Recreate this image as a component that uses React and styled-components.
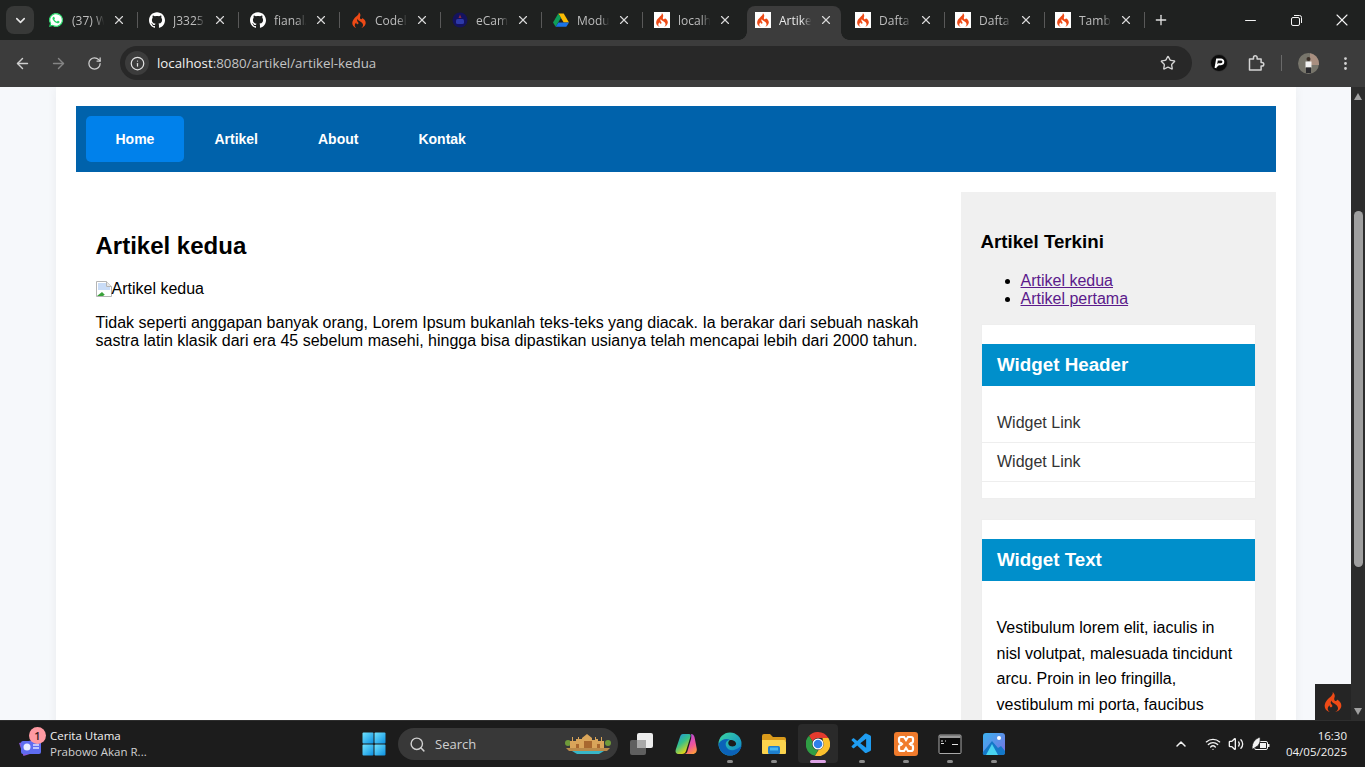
import React from "react";
import styled, { createGlobalStyle } from "styled-components";
import { ArrowLeft, ArrowRight, RotateCw, Info, Star, EllipsisVertical, ChevronDown, ChevronUp, X, Plus, Minus, Search, Wifi, Volume2 } from "lucide-react";
import { SiCodeigniter, SiGithub } from "react-icons/si";
import { IoLogoWhatsapp } from "react-icons/io5";
import { VscVscode } from "react-icons/vsc";

const GlobalStyle = createGlobalStyle`
  html, body {
    margin: 0;
    padding: 0;
    overflow: hidden;
  }
  * {
    box-sizing: border-box;
  }
`;

const Screen = styled.div`
  width: 1365px;
  height: 767px;
  display: flex;
  flex-direction: column;
  overflow: hidden;
  position: relative;
  font-family: "Liberation Sans", Arial, sans-serif;
  background: #f6f8fb;
`;

/* ---------- browser tabs ---------- */

const TabStrip = styled.div`
  height: 40px;
  flex-shrink: 0;
  display: flex;
  background: #1f2120;
  padding-left: 6px;
`;

const TabSearch = styled.div`
  width: 28px;
  height: 28px;
  margin-top: 6px;
  margin-right: 6px;
  border-radius: 8px;
  background: #383938;
  color: #e6e6e6;
  display: flex;
  align-items: center;
  justify-content: center;
`;

const Tab = styled.div`
  width: 94px;
  height: 34px;
  margin-top: 6px;
  padding: 0 8px 6px 8px;
  flex-shrink: 0;
  position: relative;
  display: flex;
  align-items: center;
  gap: 8px;
  border-radius: 8px 8px 0 0;
  background: ${({ $active }) => ($active ? "#3c3c3c" : "transparent")};
  color: ${({ $active }) => ($active ? "#e8e8e8" : "#bdbdbd")};
  ${({ $active }) =>
    $active &&
    `
    &::before, &::after {
      content: "";
      position: absolute;
      bottom: 0;
      width: 8px;
      height: 8px;
    }
    &::before {
      left: -8px;
      background: radial-gradient(circle at 0 0, transparent 7.5px, #3c3c3c 8px);
    }
    &::after {
      right: -8px;
      background: radial-gradient(circle at 100% 0, transparent 7.5px, #3c3c3c 8px);
    }
  `}
`;

const TabFavicon = styled.span`
  width: 16px;
  height: 16px;
  flex-shrink: 0;
  display: flex;
  align-items: center;
  justify-content: center;
  background: ${({ $white }) => ($white ? "#fff" : "transparent")};
  color: #ee4a16;
`;

const WhatsappMark = styled.span`
  display: flex;
  color: #25d366;
  border-radius: 50%;
  background: radial-gradient(circle, #fff 58%, transparent 60%);
`;

const GithubMark = styled.span`
  display: flex;
  color: #fff;
`;

const TabTitle = styled.span`
  width: 38px;
  margin-right: -6px;
  flex-shrink: 0;
  overflow: hidden;
  white-space: nowrap;
  font-family: "Open Sans", sans-serif;
  font-size: 12px;
  -webkit-mask-image: linear-gradient(to right, #000 60%, transparent 85%);
  mask-image: linear-gradient(to right, #000 60%, transparent 85%);
`;

const TabClose = styled.span`
  display: flex;
  margin-left: auto;
  color: #d8d8d8;
`;

const TabGap = styled.div`
  width: ${({ $w }) => $w}px;
  flex-shrink: 0;
  display: flex;
  justify-content: center;
  padding-top: 12px;
  &::before {
    content: "";
    width: 1px;
    height: 16px;
    background: ${({ $hidden }) => ($hidden ? "transparent" : "#595959")};
  }
`;

const NewTab = styled.div`
  margin-left: 6px;
  margin-top: 12px;
  height: 16px;
  color: #e0e0e0;
`;

const WindowButtons = styled.div`
  margin-left: auto;
  display: flex;
  color: #f5f5f5;
`;

const WindowButton = styled.div`
  width: 46px;
  height: 40px;
  display: flex;
  align-items: center;
  justify-content: center;
`;

/* ---------- toolbar ---------- */

const Toolbar = styled.div`
  height: 47px;
  flex-shrink: 0;
  display: flex;
  align-items: center;
  background: #3c3c3c;
  padding: 0 0 1px 4px;
`;

const NavButton = styled.div`
  width: 36px;
  height: 34px;
  flex-shrink: 0;
  display: flex;
  align-items: center;
  justify-content: center;
  color: ${({ $dim }) => ($dim ? "#858585" : "#cfcfcf")};
`;

const AddressBar = styled.div`
  width: 1072px;
  height: 34px;
  flex-shrink: 0;
  margin-left: 8px;
  margin-right: 8px;
  border-radius: 17px;
  background: #282828;
  display: flex;
  align-items: center;
  padding: 0 16px 0 5px;
`;

const SiteInfo = styled.div`
  width: 24px;
  height: 24px;
  border-radius: 50%;
  background: #3c3c3c;
  color: #e0e0e0;
  display: flex;
  align-items: center;
  justify-content: center;
`;

const Url = styled.div`
  margin-left: 8px;
  font-family: "Open Sans", sans-serif;
  font-size: 13.3px;
  color: #c4c4c4;
  span {
    color: #f0f0f0;
  }
`;

const StarWrap = styled.div`
  margin-left: auto;
  display: flex;
  color: #d4d4d4;
`;

const ToolbarRight = styled.div`
  flex: 1;
  display: flex;
  align-items: center;
  color: #d4d4d4;
`;

const ExtSlot = styled.div`
  width: 37px;
  flex-shrink: 0;
  display: flex;
  justify-content: center;
`;

const ToolbarDivider = styled.div`
  width: 1px;
  height: 16px;
  flex-shrink: 0;
  margin: 0 8px 0 7px;
  background: #6a6a6a;
`;

/* ---------- page ---------- */

const Viewport = styled.div`
  flex: 1;
  min-height: 0;
  display: flex;
`;

const Page = styled.div`
  flex: 1;
  min-width: 0;
  overflow: hidden;
  background: #f6f8fb;
`;

const Container = styled.div`
  width: 1240px;
  margin-left: 55.5px;
  padding: 19px 20px 0;
  background: #fff;
  box-shadow: 0 0 10px rgba(0, 0, 0, 0.05);
  min-height: 100%;
`;

const Nav = styled.nav`
  height: 66px;
  padding: 10px;
  display: flex;
  background: #0062ab;
`;

const NavItem = styled.a`
  padding: 15px 30px;
  font-size: 14px;
  line-height: 16px;
  font-weight: 700;
  color: #fff;
  border-radius: 5px;
  background: ${({ $active }) => ($active ? "#0081eb" : "transparent")};
`;

const Columns = styled.div`
  display: flex;
  margin-top: 20px;
  align-items: flex-start;
`;

const Main = styled.main`
  width: 885px;
  padding: 20px;
  color: #000;
  font-size: 16px;
`;

const Title = styled.h2`
  margin: 20px 0 21px;
  font-size: 24px;
  line-height: 27px;
`;

const BrokenImage = styled.div`
  height: 18px;
  display: flex;
  align-items: center;
  line-height: 18px;
`;

const Body = styled.p`
  margin: 16px 0 0;
  line-height: 18px;
`;

const Sidebar = styled.aside`
  width: 315px;
  height: 560px;
  padding: 20px;
  background: #f0f0f0;
`;

const SideTitle = styled.h3`
  margin: 18.72px 0 19.72px;
  font-size: 18.72px;
  line-height: 21.5px;
  color: #000;
`;

const SideList = styled.ul`
  margin: 0 0 16px;
  padding-left: 40px;
  font-size: 16px;
  line-height: 18px;
  a {
    color: #5b1a8b;
  }
`;

const Widget = styled.section`
  border: 1px solid #eeeeee;
  background: #fff;
  padding: 19px 0 16px;
  margin-bottom: 20px;
`;

const WidgetHeader = styled.h3`
  height: 42px;
  margin: 0;
  padding: 0 15.5px;
  display: flex;
  align-items: center;
  font-size: 18.8px;
  color: #fff;
  background: #008fcb;
`;

const WidgetLinks = styled.ul`
  list-style: none;
  margin: 18px 0 0;
  padding: 0;
`;

const WidgetLink = styled.li`
  height: 39px;
  padding: 10px 15.5px;
  font-size: 16px;
  line-height: 18px;
  color: #333;
  border-bottom: 1px solid #eeeeee;
`;

const WidgetText = styled.p`
  margin: 34px 0 0;
  padding: 0 16px 0 15px;
  font-size: 16px;
  line-height: 25.6px;
  color: #000;
`;

/* ---------- scrollbar + debug toolbar ---------- */

const Scrollbar = styled.div`
  width: 14px;
  flex-shrink: 0;
  display: flex;
  flex-direction: column;
  align-items: center;
  background: #2c2c2c;
  padding-top: 6px;
`;

const ScrollArrow = styled.div`
  width: 0;
  height: 0;
  border-left: 4.5px solid transparent;
  border-right: 4.5px solid transparent;
  ${({ $down }) => ($down ? "border-top: 7px solid #a0a0a0; margin-top: 141px;" : "border-bottom: 7px solid #a0a0a0;")}
`;

const ScrollThumb = styled.div`
  width: 9px;
  height: 356px;
  margin-top: 111px;
  border-radius: 5px;
  background: #9f9f9f;
`;

const DebugBadge = styled.div`
  position: absolute;
  left: 1315px;
  top: 684px;
  width: 36px;
  height: 36px;
  display: flex;
  align-items: center;
  justify-content: center;
  background: #252525;
  color: #ee4a16;
`;

/* ---------- taskbar ---------- */

const Taskbar = styled.div`
  height: 47px;
  flex-shrink: 0;
  display: flex;
  align-items: center;
  position: relative;
  background: #1c1c1c;
  border-top: 1px solid #2e2e2e;
  font-family: "Open Sans", sans-serif;
  color: #f2f2f2;
`;

const NewsWidget = styled.div`
  width: 362px;
  padding-left: 18px;
  display: flex;
  align-items: center;
  flex-shrink: 0;
`;

const NewsIcon = styled.div`
  width: 32px;
  height: 34px;
  position: relative;
  padding-top: 9px;
`;

const NewsBadge = styled.span`
  position: absolute;
  left: 11px;
  top: 0;
  width: 17px;
  height: 17px;
  border-radius: 50%;
  background: #ff9aa2;
  color: #3a1c20;
  font-size: 11px;
  line-height: 17px;
  text-align: center;
  font-weight: 600;
`;

const NewsText = styled.div`
  font-size: 11.5px;
  line-height: 16px;
  white-space: nowrap;
`;

const NewsSub = styled.div`
  color: #d0d0d0;
`;

const StartButton = styled.div`
  width: 24px;
  height: 24px;
  flex-shrink: 0;
  display: flex;
`;

const SearchBox = styled.div`
  width: 220px;
  height: 32px;
  margin-left: 12px;
  padding: 0 6px 0 11px;
  flex-shrink: 0;
  display: flex;
  align-items: center;
  gap: 9px;
  border-radius: 16px;
  background: #383838;
  color: #d0d0d0;
  font-size: 13px;
`;

const SearchArt = styled.div`
  margin-left: auto;
  display: flex;
`;

const TaskIcons = styled.div`
  margin-left: 2px;
  display: flex;
  flex-shrink: 0;
`;

const TaskIcon = styled.div`
  width: 44px;
  height: 44px;
  position: relative;
  display: flex;
  align-items: center;
  justify-content: center;
  &::before {
    content: "";
    position: absolute;
    left: 2px;
    right: 2px;
    top: 2px;
    bottom: 3px;
    border-radius: 4px;
    background: ${({ $active }) => ($active ? "#2a2a2a" : "transparent")};
  }
  &::after {
    content: "";
    display: ${({ $dot }) => ($dot ? "block" : "none")};
    position: absolute;
    left: 50%;
    transform: translateX(-50%);
    bottom: 3px;
    width: ${({ $active }) => ($active ? "16px" : "6px")};
    height: 3px;
    border-radius: 2px;
    background: ${({ $active }) => ($active ? "#dda3e6" : "#8a8a8a")};
  }
  svg {
    position: relative;
  }
`;

const Tray = styled.div`
  margin-left: auto;
  padding-right: 18px;
  display: flex;
  align-items: center;
  color: #f2f2f2;
`;

const TraySlot = styled.div`
  width: ${({ $w }) => $w}px;
  display: flex;
  justify-content: center;
`;

const Clock = styled.div`
  margin-left: 12px;
  text-align: right;
  font-size: 11.5px;
  line-height: 16px;
`;

/* ---------- drawn icons ---------- */

const Flame = ({ size = 14 }) => <SiCodeigniter size={size} />;

const DriveIcon = () => (
  <svg width="16" height="16" viewBox="0 0 16 16">
    <path d="M5.300 1.500h5.400L16 10.600h-5.300z" fill="#fbbc04" />
    <path d="M5.300 1.500 0 10.600l2.700 4.200 5.300-9z" fill="#0f9d58" />
    <path d="M5.400 10.600H16l-2.700 4.200H2.700z" fill="#1a73e8" />
  </svg>
);

const CrestIcon = () => (
  <svg width="16" height="16" viewBox="0 0 16 16">
    <circle cx="8" cy="8" r="7.500" fill="#14135e" />
    <path d="M8 2.500 9.500 6H6.500z" fill="#8a2b44" />
    <rect x="4" y="7" width="8" height="5" rx="1.500" fill="#2d39a8" />
  </svg>
);

const Pass = () => (
  <svg width="18" height="18" viewBox="0 0 18 18">
    <circle cx="9" cy="9" r="8.500" fill="#0b0b0b" stroke="#3a3a3a" strokeWidth="0.800" />
    <path d="M5.500 14 7 5.500h4a2.200 2.200 0 0 1 0 4.700H8.500L6 12.500" fill="none" stroke="#fff" strokeWidth="1.900" />
  </svg>
);

const PuzzleIcon = () => (
  <svg width="18" height="18" viewBox="0 0 18 18" fill="none" stroke="currentColor" strokeWidth="1.500" strokeLinejoin="round">
    <path d="M2.500 5h4V3.500a1.800 1.800 0 0 1 3.600 0V5h4v3.500h.9a1.800 1.800 0 0 1 0 3.600h-.9V16H2.500z" />
  </svg>
);

const Avatar = () => (
  <svg width="21" height="21" viewBox="0 0 21 21">
    <circle cx="10.500" cy="10.500" r="10.500" fill="#77756b" />
    <path d="M12 .3A10.500 10.500 0 0 1 21 10.500V12h-9z" fill="#a98f80" />
    <circle cx="10.500" cy="6" r="2" fill="#3c3029" />
    <path d="M7.500 8.500h6v6h-6z" fill="#f2f2f2" />
    <path d="M8 14.500h5V20H8z" fill="#2a2a2e" />
  </svg>
);

const StartIcon = () => (
  <svg width="24" height="24" viewBox="0 0 24 24">
    <defs>
      <linearGradient id="win" x1="0" y1="0" x2="1" y2="1">
        <stop offset="0" stopColor="#6fe3ff" />
        <stop offset="1" stopColor="#0c8fe0" />
      </linearGradient>
    </defs>
    <rect x="0.500" y="0.500" width="11" height="11" rx="1" fill="url(#win)" />
    <rect x="12.500" y="0.500" width="11" height="11" rx="1" fill="url(#win)" />
    <rect x="0.500" y="12.500" width="11" height="11" rx="1" fill="url(#win)" />
    <rect x="12.500" y="12.500" width="11" height="11" rx="1" fill="url(#win)" />
  </svg>
);

const NewsGlyph = () => (
  <svg width="26" height="22" viewBox="0 0 26 22">
    <path d="M1 7 20 3l1.500 12-16 5z" fill="#8a58d8" />
    <rect x="3" y="5" width="20" height="13" rx="2" fill="#5e6cf0" />
    <circle cx="9" cy="11" r="3.500" fill="#e8ecff" />
    <path d="M15 9h6M15 12h6" stroke="#dfe3ff" strokeWidth="1.300" />
  </svg>
);

const TaskViewIcon = () => (
  <svg width="24" height="24" viewBox="0 0 24 24">
    <rect x="0" y="8" width="16" height="15" rx="2" fill="#5f5f5f" />
    <rect x="7" y="1" width="16" height="15" rx="2" fill="#ececec" />
    <rect x="7" y="8" width="9" height="8" fill="#a8a8a8" />
  </svg>
);

const CopilotIcon = () => (
  <svg width="24" height="24" viewBox="0 0 24 24">
    <defs>
      <linearGradient id="cp1" x1="0" y1="0" x2="0.600" y2="1">
        <stop offset="0" stopColor="#1f8fe8" />
        <stop offset="0.500" stopColor="#35c08a" />
        <stop offset="1" stopColor="#f7d80a" />
      </linearGradient>
      <linearGradient id="cp2" x1="0.300" y1="0" x2="0.700" y2="1">
        <stop offset="0" stopColor="#b14ae0" />
        <stop offset="0.600" stopColor="#f0559a" />
        <stop offset="1" stopColor="#ff9a3c" />
      </linearGradient>
    </defs>
    <path d="M9 2h6c1.500 0 2 1 1.500 2.500L12 19c-.6 2-1.800 3-4 3H5c-3 0-4-2-3.200-4.500L6 5c.5-2 1.500-3 3-3z" fill="url(#cp1)" />
    <path d="M17 2c2 0 2.800 1 3.500 3l2.200 11.500c.5 3-1 5.500-4 5.500H10c2 0 3-1 3.500-3L17 7c.4-2 .4-4 0-5z" fill="url(#cp2)" />
  </svg>
);

const EdgeIcon = () => (
  <svg width="24" height="24" viewBox="0 0 24 24">
    <defs>
      <linearGradient id="ed1" x1="0" y1="0" x2="1" y2="1">
        <stop offset="0" stopColor="#3bd6a0" />
        <stop offset="1" stopColor="#0a7fd0" />
      </linearGradient>
    </defs>
    <circle cx="12" cy="12" r="11.500" fill="url(#ed1)" />
    <path d="M23.500 14c-1 5-5.500 9.500-11 9.500C6 23.500 1 19 .5 12 3 7 9 6 12 8c-3 0-5 2.500-4 6 1 3.500 5 5 8 4 3-1 5-2 7.500-4z" fill="#0b62b8" />
    <path d="M12 8c4 0 6.500 2 6 4.500-.5 2-4 2.500-6 1.500-2.500-1.500-2-5 0-6z" fill="#1c1c1c" />
  </svg>
);

const FolderIcon = () => (
  <svg width="24" height="24" viewBox="0 0 24 24">
    <path d="M0 4a2 2 0 0 1 2-2h6l3 3h11a2 2 0 0 1 2 2v2H0z" fill="#d99a1b" />
    <path d="M0 8h22a2 2 0 0 1 2 2v11a1 1 0 0 1-1 1H1a1 1 0 0 1-1-1z" fill="#fbd34d" />
    <rect x="6" y="14" width="12" height="8" rx="1.500" fill="#1f80cf" />
    <rect x="8" y="15.500" width="8" height="3" fill="#47b6f0" />
  </svg>
);

const ChromeIcon = () => (
  <svg width="24" height="24" viewBox="0 0 24 24">
    <path d="M12 0a12 12 0 0 1 10.400 6H12a6 6 0 0 0-5.400 3.500L3 3.700A12 12 0 0 1 12 0z" fill="#e33b2e" />
    <path d="M3 3.700 6.600 9.500A6 6 0 0 0 12 18l-3 5.700A12 12 0 0 1 3 3.700z" fill="#2f9e44" />
    <path d="M22.400 6A12 12 0 0 1 9 23.700L12.500 18A6 6 0 0 0 17 9.200L16.500 6z" fill="#fbc02d" />
    <circle cx="12" cy="12" r="5.500" fill="#fff" />
    <circle cx="12" cy="12" r="4.300" fill="#2f7fe8" />
  </svg>
);

const XamppIcon = () => (
  <svg width="24" height="24" viewBox="0 0 24 24">
    <rect width="24" height="24" rx="3" fill="#f07b2c" />
    <path d="M7 5h3l2 3 2-3h3a2 2 0 0 1 2 2v2a2 2 0 0 1-2 2l-1 1 1 1a2 2 0 0 1 2 2v2a2 2 0 0 1-2 2h-3l-2-3-2 3H7a2 2 0 0 1-2-2v-2a2 2 0 0 1 2-2l1-1-1-1a2 2 0 0 1-2-2V7a2 2 0 0 1 2-2z" fill="none" stroke="#fff" strokeWidth="2.200" />
  </svg>
);

const TerminalIcon = () => (
  <svg width="24" height="24" viewBox="0 0 24 24">
    <rect x="1" y="3" width="22" height="18.500" rx="1" fill="#0a0a0a" stroke="#a8a8a8" />
    <rect x="1.500" y="3.500" width="21" height="2.500" fill="#9a9a9a" />
    <path d="M3 9h2M7 9h1M3 11.500h3M14 12.500h6" stroke="#e0e0e0" strokeWidth="1.200" />
  </svg>
);

const PhotosIcon = () => (
  <svg width="24" height="24" viewBox="0 0 24 24">
    <defs>
      <linearGradient id="ph" x1="0" y1="0" x2="1" y2="1">
        <stop offset="0" stopColor="#3bb2f0" />
        <stop offset="1" stopColor="#7a6fe0" />
      </linearGradient>
    </defs>
    <rect x="1" y="1" width="22" height="22" rx="3" fill="url(#ph)" />
    <circle cx="17" cy="6" r="2" fill="#fff" />
    <path d="M1 20 10 9l6 7 3-2 4 5v2a2 2 0 0 1-2 2H3a2 2 0 0 1-2-3z" fill="#1478c8" />
    <path d="M4 23 10 12l6 11z" fill="#49d3f0" />
  </svg>
);

const BatteryLeafIcon = () => (
  <svg width="20" height="16" viewBox="0 0 20 16">
    <rect x="3.500" y="5.500" width="13" height="8" rx="1.500" fill="none" stroke="currentColor" />
    <rect x="17" y="8" width="1.500" height="3" fill="currentColor" />
    <rect x="9" y="7" width="6" height="5" fill="currentColor" />
    <path d="M1 13C1 6 4 3 9 1c.5 4 0 8-4 10l-3 2z" fill="currentColor" stroke="#1c1c1c" strokeWidth="0.800" />
  </svg>
);

const BrokenImageIcon = () => (
  <svg width="16" height="16" viewBox="0 0 16 16">
    <path d="M.5.500h10l5 5v10H.5z" fill="#fff" stroke="#b5b5b5" />
    <path d="M10.500.500v5h5" fill="#e8e8e8" stroke="#b5b5b5" />
    <path d="M2 2h8v4h4v3L2 9z" fill="#c9dcf7" />
    <path d="M1 15l5-4 4 4z" fill="#3aa23a" />
    <path d="M7 15l7-5v5z" fill="#fff" />
  </svg>
);

const SearchArtIcon = () => (
  <svg width="48" height="24" viewBox="0 0 48 24">
    <circle cx="4" cy="11" r="3" fill="#6f9a3a" />
    <circle cx="44" cy="11" r="3" fill="#6f9a3a" />
    <path d="M6 16V9h2V5h1v4h3v-2h2v-2h1v2h3V6l5-4 5 4v2h3V5h1v2h2v2h3V5h1v4h2v7z" fill="#d9a55a" />
    <path d="M20 16V9h8v7zM12 16v-4h3v4zM33 16v-4h3v4z" fill="#a8682f" />
    <path d="M2 16h44l-3 3H5z" fill="#b98a4a" />
    <path d="M8 19h32l-5 3H13z" fill="#38b6c8" />
  </svg>
);

const tabs = [
  { title: "(37) W", icon: <WhatsappMark><IoLogoWhatsapp size={16} /></WhatsappMark> },
  { title: "J3325", icon: <GithubMark><SiGithub size={16} /></GithubMark> },
  { title: "fianal/", icon: <GithubMark><SiGithub size={16} /></GithubMark> },
  { title: "Codel", icon: <Flame size={16} /> },
  { title: "eCam", icon: <CrestIcon /> },
  { title: "Modu", icon: <DriveIcon /> },
  { title: "localh", icon: <Flame />, white: true },
  { title: "Artike", icon: <Flame />, white: true, active: true },
  { title: "Dafta", icon: <Flame />, white: true },
  { title: "Dafta", icon: <Flame />, white: true },
  { title: "Tamb", icon: <Flame />, white: true },
];

const taskIcons = [
  { icon: <TaskViewIcon /> },
  { icon: <CopilotIcon /> },
  { icon: <EdgeIcon />, dot: true },
  { icon: <FolderIcon />, dot: true },
  { icon: <ChromeIcon />, dot: true, active: true },
  { icon: <VscVscode size={24} color="#1f9cf0" />, dot: true },
  { icon: <XamppIcon />, dot: true },
  { icon: <TerminalIcon />, dot: true },
  { icon: <PhotosIcon />, dot: true },
];

export default function App() {
  return (
    <Screen>
      <GlobalStyle />
      <TabStrip>
        <TabSearch>
          <ChevronDown size={15} strokeWidth={2.5} />
        </TabSearch>
        {tabs.map((tab, i) => (
          <React.Fragment key={i}>
            <Tab $active={tab.active}>
              <TabFavicon $white={tab.white}>{tab.icon}</TabFavicon>
              <TabTitle>{tab.title}</TabTitle>
              <TabClose>
                <X size={14} strokeWidth={2} />
              </TabClose>
            </Tab>
            <TabGap $w={i < 7 ? 7 : 6} $hidden={tab.active || (tabs[i + 1] && tabs[i + 1].active)} />
          </React.Fragment>
        ))}
        <NewTab>
          <Plus size={16} strokeWidth={2} />
        </NewTab>
        <WindowButtons>
          <WindowButton>
            <Minus size={17} strokeWidth={1.4} />
          </WindowButton>
          <WindowButton>
            <svg width="11" height="11" viewBox="0 0 11 11" fill="none" stroke="currentColor">
              <rect x="0.500" y="2.500" width="8" height="8" rx="1.500" />
              <path d="M3 .5h5.500a2 2 0 0 1 2 2V8" />
            </svg>
          </WindowButton>
          <WindowButton>
            <X size={20} strokeWidth={1.3} />
          </WindowButton>
        </WindowButtons>
      </TabStrip>

      <Toolbar>
        <NavButton>
          <ArrowLeft size={17} />
        </NavButton>
        <NavButton $dim>
          <ArrowRight size={17} />
        </NavButton>
        <NavButton>
          <RotateCw size={15} />
        </NavButton>
        <AddressBar>
          <SiteInfo>
            <Info size={15} />
          </SiteInfo>
          <Url>
            <span>localhost</span>:8080/artikel/artikel-kedua
          </Url>
          <StarWrap>
            <Star size={16} />
          </StarWrap>
        </AddressBar>
        <ToolbarRight>
          <ExtSlot>
            <Pass />
          </ExtSlot>
          <ExtSlot>
            <PuzzleIcon />
          </ExtSlot>
          <ToolbarDivider />
          <ExtSlot>
            <Avatar />
          </ExtSlot>
          <ExtSlot>
            <EllipsisVertical size={17} />
          </ExtSlot>
        </ToolbarRight>
      </Toolbar>

      <Viewport>
        <Page>
          <Container>
            <Nav>
              <NavItem $active>Home</NavItem>
              <NavItem>Artikel</NavItem>
              <NavItem>About</NavItem>
              <NavItem>Kontak</NavItem>
            </Nav>
            <Columns>
              <Main>
                <Title>Artikel kedua</Title>
                <BrokenImage>
                  <BrokenImageIcon />
                  Artikel kedua
                </BrokenImage>
                <Body>
                  Tidak seperti anggapan banyak orang, Lorem Ipsum bukanlah teks-teks yang diacak. Ia berakar dari sebuah naskah sastra latin klasik dari era 45 sebelum masehi, hingga bisa dipastikan usianya telah mencapai lebih dari 2000 tahun.
                </Body>
              </Main>
              <Sidebar>
                <SideTitle>Artikel Terkini</SideTitle>
                <SideList>
                  <li>
                    <a href="#kedua">Artikel kedua</a>
                  </li>
                  <li>
                    <a href="#pertama">Artikel pertama</a>
                  </li>
                </SideList>
                <Widget>
                  <WidgetHeader>Widget Header</WidgetHeader>
                  <WidgetLinks>
                    <WidgetLink>Widget Link</WidgetLink>
                    <WidgetLink>Widget Link</WidgetLink>
                  </WidgetLinks>
                </Widget>
                <Widget>
                  <WidgetHeader>Widget Text</WidgetHeader>
                  <WidgetText>
                    Vestibulum lorem elit, iaculis in nisl volutpat, malesuada tincidunt arcu. Proin in leo fringilla, vestibulum mi porta, faucibus
                  </WidgetText>
                </Widget>
              </Sidebar>
            </Columns>
          </Container>
        </Page>
        <Scrollbar>
          <ScrollArrow />
          <ScrollThumb />
          <ScrollArrow $down />
        </Scrollbar>
      </Viewport>
      <DebugBadge>
        <Flame size={20} />
      </DebugBadge>

      <Taskbar>
        <NewsWidget>
          <NewsIcon>
            <NewsGlyph />
            <NewsBadge>1</NewsBadge>
          </NewsIcon>
          <NewsText>
            Cerita Utama
            <NewsSub>Prabowo Akan R...</NewsSub>
          </NewsText>
        </NewsWidget>
        <StartButton>
          <StartIcon />
        </StartButton>
        <SearchBox>
          <Search size={17} strokeWidth={2} />
          Search
          <SearchArt>
            <SearchArtIcon />
          </SearchArt>
        </SearchBox>
        <TaskIcons>
          {taskIcons.map((item, i) => (
            <TaskIcon key={i} $dot={item.dot} $active={item.active}>
              {item.icon}
            </TaskIcon>
          ))}
        </TaskIcons>
        <Tray>
          <TraySlot $w={42}>
            <ChevronUp size={16} strokeWidth={2.2} />
          </TraySlot>
          <TraySlot $w={22}>
            <Wifi size={16} />
          </TraySlot>
          <TraySlot $w={24}>
            <Volume2 size={16} />
          </TraySlot>
          <TraySlot $w={26}>
            <BatteryLeafIcon />
          </TraySlot>
          <Clock>
            16:30
            <br />
            04/05/2025
          </Clock>
        </Tray>
      </Taskbar>
    </Screen>
  );
}
